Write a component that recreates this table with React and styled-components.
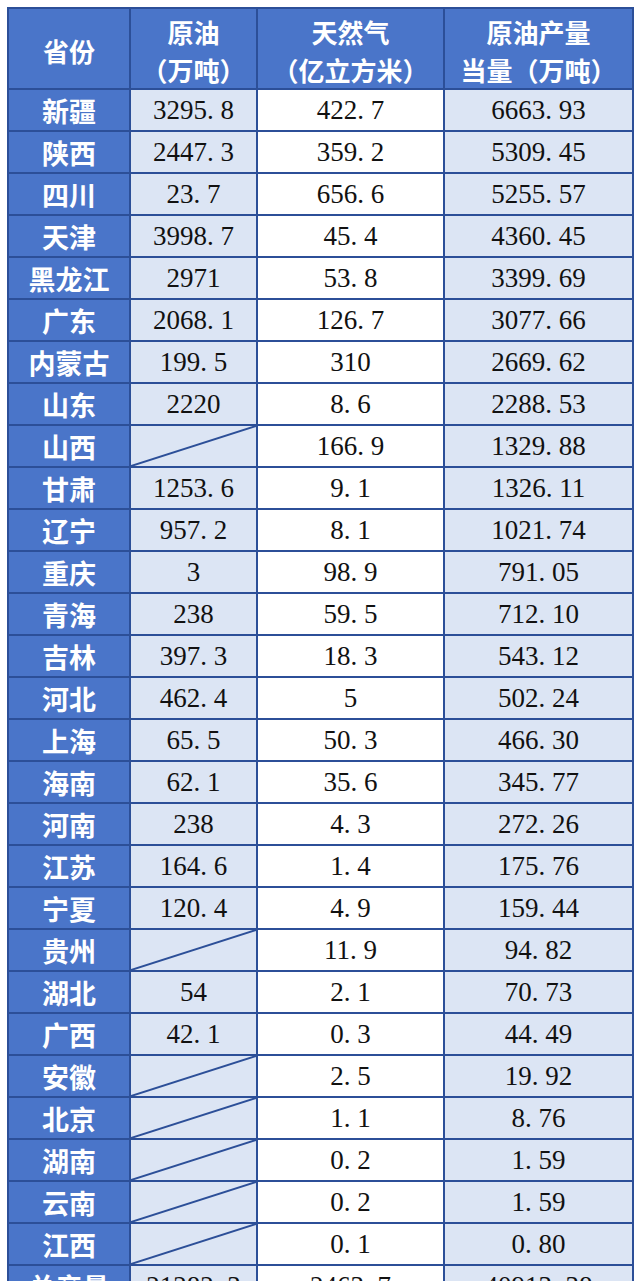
import React from "react";
import styled, { createGlobalStyle } from "styled-components";

const blue = "#4a75c9";
const line = "#2c4f98";
const pale = "#dce5f4";
const white = "#fff";

const GlobalStyle = createGlobalStyle`
    html, body {
        margin: 0;
        padding: 0;
        background: ${white};
    }
`;

const Page = styled.div`
    padding: 7px 0 0 7px;
`;

const Table = styled.div`
    display: grid;
    grid-template-columns: 120px 125px 185px 187px;
    grid-template-rows: 79px;
    grid-auto-rows: 40px;
    gap: 2px;
    width: fit-content;
    background: ${line};
    border: 2px solid ${line};
`;

const Head = styled.div`
    background: ${blue};
    color: ${white};
    font-family: "Noto Sans CJK SC", "Liberation Sans", sans-serif;
    font-weight: 700;
    font-size: 26px;
    line-height: 38px;
    display: flex;
    flex-direction: column;
    align-items: center;
    justify-content: center;
    padding-top: 5px;
    box-sizing: border-box;
    white-space: nowrap;
`;

const Name = styled.div`
    background: ${blue};
    color: ${white};
    font-family: "Noto Sans CJK SC", "Liberation Sans", sans-serif;
    font-weight: 700;
    font-size: 27px;
    display: flex;
    align-items: center;
    justify-content: center;
    white-space: nowrap;
`;

const Cell = styled.div`
    position: relative;
    background: ${(p) => (p.$pale ? pale : white)};
    color: #111;
    font-family: "Liberation Serif", "Times New Roman", serif;
    font-size: 27px;
    display: flex;
    align-items: center;
    justify-content: center;
    white-space: nowrap;
`;

const Dot = styled.span`
    display: inline-block;
    width: 0.5em;
`;

const Slash = styled.svg`
    position: absolute;
    inset: 0;
    width: 100%;
    height: 100%;
`;

const rows = [
    ["新疆", "3295.8", "422.7", "6663.93"],
    ["陕西", "2447.3", "359.2", "5309.45"],
    ["四川", "23.7", "656.6", "5255.57"],
    ["天津", "3998.7", "45.4", "4360.45"],
    ["黑龙江", "2971", "53.8", "3399.69"],
    ["广东", "2068.1", "126.7", "3077.66"],
    ["内蒙古", "199.5", "310", "2669.62"],
    ["山东", "2220", "8.6", "2288.53"],
    ["山西", null, "166.9", "1329.88"],
    ["甘肃", "1253.6", "9.1", "1326.11"],
    ["辽宁", "957.2", "8.1", "1021.74"],
    ["重庆", "3", "98.9", "791.05"],
    ["青海", "238", "59.5", "712.10"],
    ["吉林", "397.3", "18.3", "543.12"],
    ["河北", "462.4", "5", "502.24"],
    ["上海", "65.5", "50.3", "466.30"],
    ["海南", "62.1", "35.6", "345.77"],
    ["河南", "238", "4.3", "272.26"],
    ["江苏", "164.6", "1.4", "175.76"],
    ["宁夏", "120.4", "4.9", "159.44"],
    ["贵州", null, "11.9", "94.82"],
    ["湖北", "54", "2.1", "70.73"],
    ["广西", "42.1", "0.3", "44.49"],
    ["安徽", null, "2.5", "19.92"],
    ["北京", null, "1.1", "8.76"],
    ["湖南", null, "0.2", "1.59"],
    ["云南", null, "0.2", "1.59"],
    ["江西", null, "0.1", "0.80"],
    ["总产量", "21282.3", "2463.7", "40913.38"],
];

// SimSun-like spacing: the dot takes a half-width slot like the digits
const Num = ({ value }) => {
    const [whole, frac] = value.split(".");
    return (
        <span>
            {whole}
            {frac !== undefined && (
                <>
                    <Dot>.</Dot>
                    {frac}
                </>
            )}
        </span>
    );
};

const Value = ({ value, pale }) => (
    <Cell $pale={pale}>
        {value === null ? (
            <Slash viewBox="0 0 100 100" preserveAspectRatio="none">
                <line x1="0" y1="100" x2="100" y2="0" stroke={line} strokeWidth="2" vectorEffect="non-scaling-stroke" />
            </Slash>
        ) : (
            <Num value={value} />
        )}
    </Cell>
);

const App = () => {
    return (
        <Page>
            <GlobalStyle />
            <Table>
                <Head>
                    <span>省份</span>
                </Head>
                <Head>
                    <span>原油</span>
                    <span>（万吨）</span>
                </Head>
                <Head>
                    <span>天然气</span>
                    <span>（亿立方米）</span>
                </Head>
                <Head>
                    <span>原油产量</span>
                    <span>当量（万吨）</span>
                </Head>
                {rows.map(([name, oil, gas, total]) => (
                    <React.Fragment key={name}>
                        <Name>{name}</Name>
                        <Value value={oil} pale />
                        <Value value={gas} />
                        <Value value={total} pale />
                    </React.Fragment>
                ))}
            </Table>
        </Page>
    );
};

export default App;
